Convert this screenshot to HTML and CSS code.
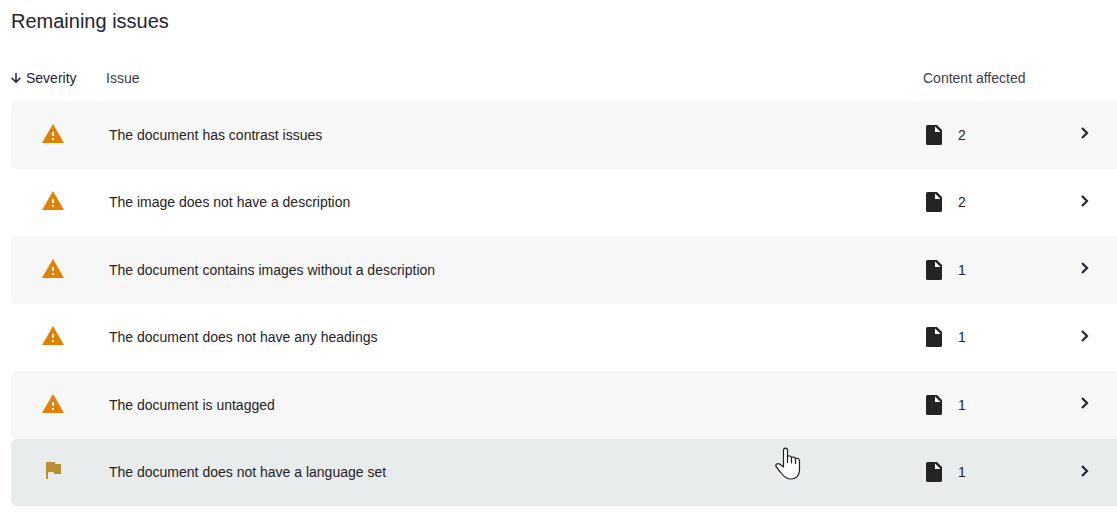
FILE: index.html
```html
<!DOCTYPE html>
<html lang="en">
<head>
  <meta charset="UTF-8">
  <meta name="viewport" content="width=device-width, initial-scale=1">
  <title>Remaining issues</title>
  <link rel="stylesheet" href="styles.css">
</head>
<body>

<!-- shared icons -->
<svg class="sprite" aria-hidden="true">
  <symbol id="warning" viewBox="0 0 24 24"><path fill="currentColor" d="M1 21h22L12 2z"/><path fill="#fff" d="M11 10h2v4h-2zM11 16h2v2h-2z"/></symbol>
  <symbol id="flag" viewBox="0 0 24 24"><path fill="currentColor" d="M14.4 6L14 4H5v17h2v-7h5.6l.4 2h7V6z"/></symbol>
  <symbol id="file" viewBox="0 0 24 24"><path fill="currentColor" d="M5.500 2H15l5 5v13.500a1.500 1.500 0 0 1-1.500 1.500h-13A1.500 1.500 0 0 1 4 20.500v-17A1.500 1.500 0 0 1 5.500 2z"/><path fill="#fff" d="M13 3.500v5.500h5.500z"/></symbol>
  <symbol id="chevron" viewBox="0 0 12 12"><path fill="none" stroke="currentColor" stroke-width="2.200" d="M3 1l5 5-5 5"/></symbol>
</svg>

<main class="issues">
  <h2>Remaining issues</h2>
  <table class="issue-table">
    <thead>
      <tr>
        <th class="severity" aria-sort="descending">
          <button class="sort-btn"><svg class="arrow" viewBox="0 0 10 10"><path d="M5 0v9M0.700 4.900L5 9.200l4.300-4.300"/></svg>Severity</button>
        </th>
        <th class="issue">Issue</th>
        <th class="affected">Content affected</th>
        <th class="open"></th>
      </tr>
    </thead>
    <tbody>
      <tr>
        <td class="severity"><svg class="icon warning"><use href="#warning"/></svg></td>
        <td class="issue">The document has contrast issues</td>
        <td class="affected"><div class="count"><svg class="icon"><use href="#file"/></svg>2</div></td>
        <td class="open"><button class="open-btn" aria-label="Open issue"><svg class="chevron"><use href="#chevron"/></svg></button></td>
      </tr>
      <tr>
        <td class="severity"><svg class="icon warning"><use href="#warning"/></svg></td>
        <td class="issue">The image does not have a description</td>
        <td class="affected"><div class="count"><svg class="icon"><use href="#file"/></svg>2</div></td>
        <td class="open"><button class="open-btn" aria-label="Open issue"><svg class="chevron"><use href="#chevron"/></svg></button></td>
      </tr>
      <tr>
        <td class="severity"><svg class="icon warning"><use href="#warning"/></svg></td>
        <td class="issue">The document contains images without a description</td>
        <td class="affected"><div class="count"><svg class="icon"><use href="#file"/></svg>1</div></td>
        <td class="open"><button class="open-btn" aria-label="Open issue"><svg class="chevron"><use href="#chevron"/></svg></button></td>
      </tr>
      <tr>
        <td class="severity"><svg class="icon warning"><use href="#warning"/></svg></td>
        <td class="issue">The document does not have any headings</td>
        <td class="affected"><div class="count"><svg class="icon"><use href="#file"/></svg>1</div></td>
        <td class="open"><button class="open-btn" aria-label="Open issue"><svg class="chevron"><use href="#chevron"/></svg></button></td>
      </tr>
      <tr>
        <td class="severity"><svg class="icon warning"><use href="#warning"/></svg></td>
        <td class="issue">The document is untagged</td>
        <td class="affected"><div class="count"><svg class="icon"><use href="#file"/></svg>1</div></td>
        <td class="open"><button class="open-btn" aria-label="Open issue"><svg class="chevron"><use href="#chevron"/></svg></button></td>
      </tr>
      <tr class="active">
        <td class="severity"><svg class="icon flag"><use href="#flag"/></svg></td>
        <td class="issue">The document does not have a language set</td>
        <td class="affected"><div class="count"><svg class="icon"><use href="#file"/></svg>1</div></td>
        <td class="open"><button class="open-btn" aria-label="Open issue"><svg class="chevron"><use href="#chevron"/></svg></button></td>
      </tr>
    </tbody>
  </table>
</main>

<svg class="pointer" viewBox="0 0 26 34" aria-hidden="true">
  <path fill="#fff" d="M8.500 20V3.500C8.500 .4 12.500 .4 12.500 3.500V9.500C14 8.300 16 9 16.500 10.500C18 9.500 20 10 20.500 11.700C22 10.700 24.500 11.500 24.500 14V23C24.500 28.500 21 32 16 32C11.500 32 9 29.500 7 27L1.300 20C-.2 17.500 2.500 15.500 5 17.300z"/>
  <path d="M12.500 9.500V15.500M16.500 10.500V16M20.500 11.700V16.500"/>
</svg>

</body>
</html>
```

FILE: styles.css
```css
* {
  box-sizing: border-box;
}
body {
  margin: 0;
  font-family: "Liberation Sans", Arial, sans-serif;
  font-size: 14px;
  color: #262324;
  background: #fff;
}
.sprite {
  display: none;
}
.issues {
  padding: 8px 0 11px 11px;
}
h2 {
  margin: 0;
  font-size: 20px;
  font-weight: normal;
  line-height: 26px;
  color: #23242f;
}
.issue-table {
  width: 100%;
  margin-top: 20px;
  table-layout: fixed;
  border-collapse: separate;
  border-spacing: 0;
}
th, td {
  padding: 0;
  text-align: left;
  font-weight: normal;
}
th {
  height: 47px;
  color: #3d3c48;
}
th.severity {
  width: 95px;
}
th.affected {
  width: 148px;
}
th.open {
  width: 46px;
}
td {
  height: 67px;
  padding-bottom: 1px;
}
tbody tr:nth-child(odd) td {
  height: 68px;
  padding-bottom: 0;
  background: #f7f7f7;
}
tbody tr.active td {
  background: #e8eced;
}
td.severity {
  padding-left: 30px;
  border-radius: 6px 0 0 6px;
}
td.issue {
  padding-left: 3px;
}
button {
  padding: 0;
  border: none;
  background: none;
  font: inherit;
  color: #23242f;
}
.sort-btn {
  display: flex;
  align-items: center;
  gap: 5px;
}
.arrow {
  width: 10px;
  height: 10px;
  fill: none;
  stroke: #23243a;
  stroke-width: 1.5;
}
.icon {
  display: block;
  width: 24px;
  height: 24px;
}
.warning {
  color: #e28000;
  margin-bottom: 2px;
}
.flag {
  color: #bb8f33;
  margin-bottom: 4px;
}
.count {
  display: flex;
  align-items: center;
  gap: 12px;
  margin-left: -1px;
}
td.open {
  padding-bottom: 0;
}
.open-btn {
  display: block;
  padding: 0 8px 4px;
}
.chevron {
  display: block;
  width: 12px;
  height: 12px;
}
/* hand cursor over the highlighted row */
.pointer {
  position: absolute;
  left: 775px;
  top: 447px;
  width: 26px;
  height: 34px;
  fill: none;
  stroke: #1c1d26;
  stroke-width: 1.2;
  stroke-linejoin: round;
  stroke-linecap: round;
}
```
